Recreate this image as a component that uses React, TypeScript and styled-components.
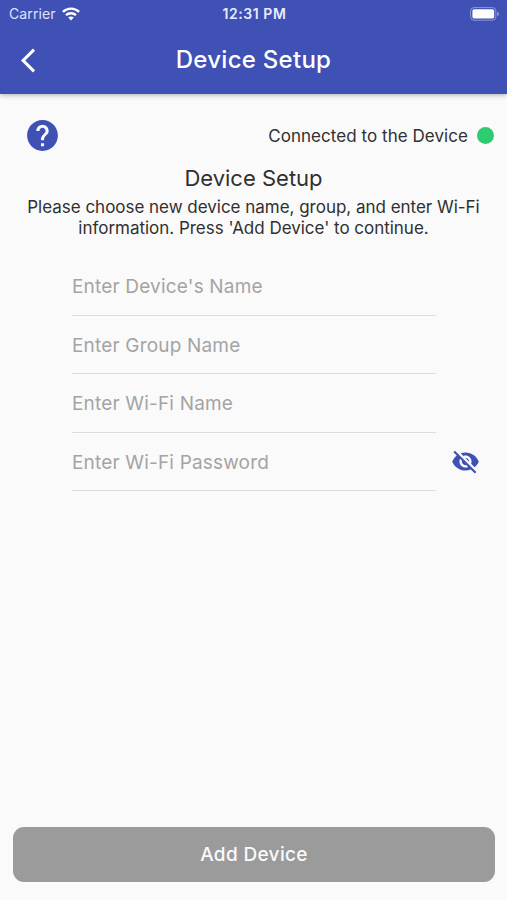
import React from "react";
import styled, { createGlobalStyle } from "styled-components";
import { MdArrowBackIos, MdHelp, MdVisibilityOff } from "react-icons/md";

const INDIGO = "#3f51b5";

const GlobalStyle = createGlobalStyle`
  *, *::before, *::after { box-sizing: border-box; }
  body { margin: 0; background: #fafafa; }
  button, input { font: inherit; letter-spacing: inherit; }
`;

const Screen = styled.div`
  display: flex;
  flex-direction: column;
  width: 100%;
  height: 900px;
  background: #fafafa;
  color: #303030;
  font-family: Inter, "Liberation Sans", sans-serif;
`;

const Header = styled.header`
  flex: none;
  height: 94px;
  background: ${INDIGO};
  color: #fff;
  box-shadow: 0 1px 5px rgba(0, 0, 0, 0.3);
`;

const StatusBar = styled.div`
  display: grid;
  grid-template-columns: 1fr auto 1fr;
  align-items: center;
  height: 27px;
  padding: 0 7px 0 9px;
  font-size: 14px;
  line-height: 27px;
`;

const Carrier = styled.div`
  display: flex;
  align-items: center;
  gap: 6px;
  color: #dfe3f8;
  letter-spacing: 0.1px;
`;

const Clock = styled.time`
  font-weight: 600;
  color: #e8ebfb;
  letter-spacing: 0.55px;
`;

const BatterySlot = styled.div`
  display: flex;
  justify-content: flex-end;
`;

const NavBar = styled.nav`
  display: grid;
  grid-template-columns: 60px 1fr 60px;
  align-items: center;
  height: 66px;
`;

const BackButton = styled.button`
  display: flex;
  padding: 0 0 0 21px;
  border: 0;
  background: none;
  color: #fff;
`;

const NavTitle = styled.h1`
  margin: 0;
  font-size: 24px;
  font-weight: 500;
  line-height: 32px;
  letter-spacing: 0.27px;
  text-align: center;
`;

const StatusRow = styled.div`
  display: flex;
  align-items: center;
  justify-content: space-between;
  height: 38px;
  margin-top: 22px;
  padding: 0 13px 0 24px;
`;

const HelpButton = styled.button`
  display: flex;
  padding: 0;
  border: 0;
  background: none;
  color: ${INDIGO};
`;

const Connection = styled.div`
  display: flex;
  align-items: center;
  gap: 9px;
  font-size: 17px;
  letter-spacing: 0.05px;
`;

const ConnectionLabel = styled.span`
  padding-top: 1px;
`;

const Dot = styled.span`
  width: 17px;
  height: 17px;
  border-radius: 50%;
  background: #2ecc71;
`;

const Intro = styled.section`
  margin-top: 9px;
  text-align: center;
`;

const Heading = styled.h2`
  margin: 0;
  font-size: 22px;
  font-weight: 400;
  line-height: 30px;
  letter-spacing: 0;
`;

const Description = styled.p`
  margin: 4px 0 0;
  font-size: 17px;
  line-height: 21px;
  letter-spacing: -0.02px;
  white-space: nowrap;
`;

const Form = styled.form`
  margin-top: 18px;
`;

const FieldRow = styled.div`
  display: flex;
  align-items: center;
  height: 58.6px;
  padding-left: 72px;
`;

const Field = styled.input`
  width: 364px;
  height: 100%;
  padding: 2px 0 0;
  border: 0;
  border-bottom: 1px solid #dcdcdc;
  border-radius: 0;
  outline: 0;
  background: none;
  font-size: 19px;
  letter-spacing: 0.18px;
  color: #303030;

  &::placeholder { color: #a4a4a4; opacity: 1; }
`;

const ToggleButton = styled.button`
  display: flex;
  margin: 0 0 1px 15px;
  padding: 0;
  border: 0;
  background: none;
  color: ${INDIGO};
`;

const Footer = styled.footer`
  margin-top: auto;
  padding: 0 12px 18px 13px;
`;

const AddButton = styled.button`
  display: block;
  width: 100%;
  height: 55px;
  padding: 0;
  border: 0;
  border-radius: 11px;
  background: #9b9b9b;
  color: #fafafa;
  font-size: 19px;
  font-weight: 500;
  letter-spacing: 0.35px;
`;

const WifiIcon = () => (
  <svg width="18" height="14" viewBox="0 0 18 14" fill="none" stroke="#fff" strokeWidth="2.4">
    <path d="M.9 4.9a11.6 11.6 0 0 1 16.2 0" />
    <path d="M4 8.2a7.2 7.2 0 0 1 10 0" />
    <path d="M9 13.4 6.2 10.6a3.9 3.9 0 0 1 5.6 0Z" fill="#fff" stroke="none" />
  </svg>
);

const BatteryIcon = () => (
  <svg width="30" height="14" viewBox="0 0 30 14">
    <rect x=".6" y=".6" width="25.3" height="12.6" rx="3.4" fill="none" stroke="#8d98d5" strokeWidth="1" />
    <rect x="2.4" y="2.3" width="21.8" height="9.2" rx="1.7" fill="#fff" />
    <path d="M27.2 4.7c2.6.8 2.6 3.6 0 4.4Z" fill="#8d98d5" />
  </svg>
);

const fields = [
  { name: "device", hint: "Enter Device's Name" },
  { name: "group", hint: "Enter Group Name" },
  { name: "wifi", hint: "Enter Wi-Fi Name" },
  { name: "password", hint: "Enter Wi-Fi Password", secret: true },
];

export default function App() {
  return (
    <>
      <GlobalStyle />
      <Screen>
        <Header>
          <StatusBar>
            <Carrier>
              <span>Carrier</span>
              <WifiIcon />
            </Carrier>
            <Clock>12:31 PM</Clock>
            <BatterySlot>
              <BatteryIcon />
            </BatterySlot>
          </StatusBar>
          <NavBar>
            <BackButton aria-label="Back">
              <MdArrowBackIos size={29} />
            </BackButton>
            <NavTitle>Device Setup</NavTitle>
          </NavBar>
        </Header>
        <StatusRow>
          <HelpButton aria-label="Help">
            <MdHelp size={37} />
          </HelpButton>
          <Connection>
            <ConnectionLabel>Connected to the Device</ConnectionLabel>
            <Dot />
          </Connection>
        </StatusRow>
        <Intro>
          <Heading>Device Setup</Heading>
          <Description>
            Please choose new device name, group, and enter Wi-Fi
            <br />
            information. Press 'Add Device' to continue.
          </Description>
        </Intro>
        <Form>
          {fields.map((field) => (
            <FieldRow key={field.name}>
              <Field name={field.name} type={field.secret ? "password" : "text"} placeholder={field.hint} />
              {field.secret && (
                <ToggleButton type="button" aria-label="Show password">
                  <MdVisibilityOff size={29} />
                </ToggleButton>
              )}
            </FieldRow>
          ))}
        </Form>
        <Footer>
          <AddButton>Add Device</AddButton>
        </Footer>
      </Screen>
    </>
  );
}
